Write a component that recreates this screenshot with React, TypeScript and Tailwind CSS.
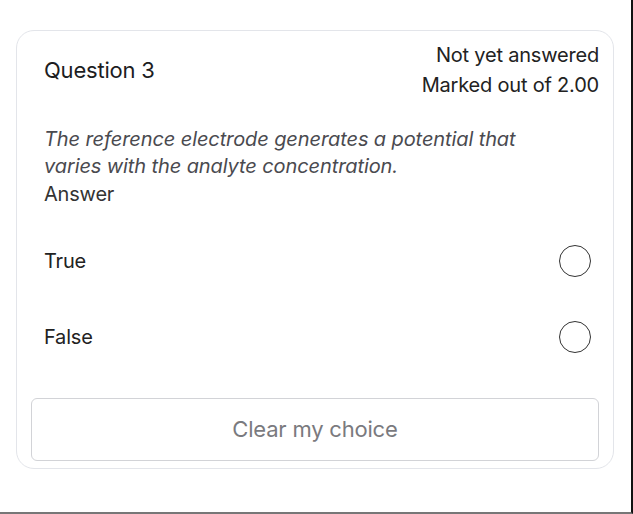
import React from 'react';

const options = ['True', 'False'];

export default function App() {
  return (
    <div
      className="w-[633px] h-[514px] bg-white border-r-2 border-r-[#111] border-b-2 border-b-[#777] overflow-hidden"
      style={{ fontFamily: 'Inter, "Noto Sans", sans-serif' }}
    >
      <div className="mt-[30px] ml-[16px] w-[598px] h-[439px] border border-[#e3e5ea] rounded-[18px] px-[14px] pt-[9px]">
        <div className="flex justify-between pl-[13px]">
          <h2 className="text-[22px] text-[#1d1d1f] mt-[15px] leading-[30px] tracking-[-0.2px]">Question 3</h2>
          <div className="text-right text-[20px] leading-[30px] text-[#222] tracking-[-0.2px]">
            <div>Not yet answered</div>
            <div>Marked out of 2.00</div>
          </div>
        </div>

        <div className="pl-[13px] mt-[26px]">
          <p className="italic text-[20px] leading-[27px] text-[#4a4a4f] tracking-[-0.1px]">
            The reference electrode generates a potential that
            <br />
            varies with the analyte concentration.
          </p>
          <p className="text-[20px] leading-[29px] text-[#333] tracking-[-0.2px]">Answer</p>
        </div>

        <div className="mt-[14px] flex flex-col">
          {options.map((opt) => (
            <label key={opt} className="flex items-center justify-between h-[76px] pl-[13px] pr-[8px]">
              <span className="text-[20px] text-[#222] tracking-[-0.2px]">{opt}</span>
              <span className="w-[32px] h-[32px] rounded-full border-[1.5px] border-[#333]" />
            </label>
          ))}
        </div>

        <button className="mt-[23px] w-full h-[63px] border-[1.5px] border-[#d2d3d7] rounded-[6px] text-[22px] text-[#7a7a7e] tracking-[-0.2px]">
          Clear my choice
        </button>
      </div>
    </div>
  );
}
